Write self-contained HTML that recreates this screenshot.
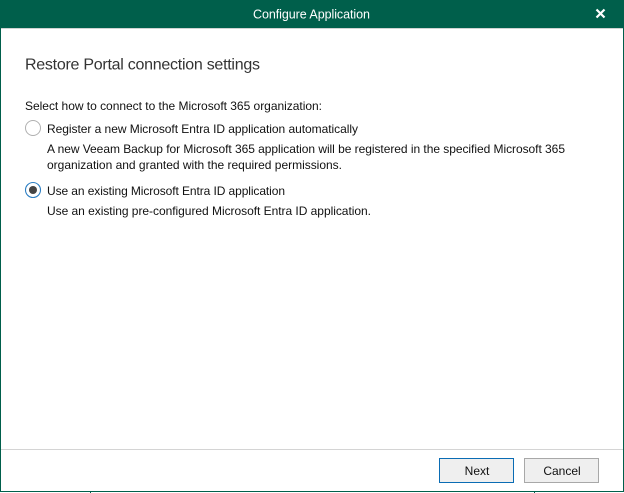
<!DOCTYPE html>
<html><head><meta charset="utf-8">
<style>
html,body{margin:0;padding:0;width:624px;height:493px;overflow:hidden;background:#fff}
svg{display:block}
text{font-family:"Liberation Sans",sans-serif;font-size:12px;fill:#111}
</style></head>
<body>
<svg width="624" height="493" viewBox="0 0 624 493" xmlns="http://www.w3.org/2000/svg">
<rect width="624" height="493" fill="#fff"/>
<rect x="0" y="0" width="624" height="28" fill="#005f4b"/>
<rect x="1" y="28" width="622" height="1" fill="#cfd3d2"/>
<rect x="0" y="28" width="1" height="464" fill="#005f4b"/>
<rect x="623" y="28" width="1" height="464" fill="#005f4b"/>
<rect x="0" y="491" width="624" height="1" fill="#005f4b"/>
<rect x="90" y="492" width="1" height="1" fill="#005f4b"/>
<rect x="534" y="492" width="1" height="1" fill="#005f4b"/>
<text x="253" y="18.500" textLength="117" lengthAdjust="spacing" style="fill:#fff;font-size:12.500px">Configure Application</text>
<path d="M596.500 9.500L604.500 17.500M604.500 9.500L596.500 17.500" stroke="#fff" stroke-width="2.200" fill="none"/>
<text x="25" y="69.500" textLength="235" lengthAdjust="spacing" style="font-size:16px;fill:#333">Restore Portal connection settings</text>
<text x="25" y="110" textLength="297" lengthAdjust="spacing">Select how to connect to the Microsoft 365 organization:</text>
<circle cx="33" cy="128" r="7.500" fill="#fff" stroke="#b0b0b0" stroke-width="1"/>
<text x="47" y="133" textLength="311" lengthAdjust="spacing">Register a new Microsoft Entra ID application automatically</text>
<text x="47" y="153" textLength="518" lengthAdjust="spacing">A new Veeam Backup for Microsoft 365 application will be registered in the specified Microsoft 365</text>
<text x="47" y="169" textLength="295" lengthAdjust="spacing">organization and granted with the required permissions.</text>
<circle cx="33" cy="190" r="7.500" fill="#fff" stroke="#2f80c4" stroke-width="1.100"/>
<circle cx="33" cy="190" r="4" fill="#444"/>
<text x="47" y="195" textLength="238" lengthAdjust="spacing">Use an existing Microsoft Entra ID application</text>
<text x="47" y="215" textLength="324" lengthAdjust="spacing">Use an existing pre-configured Microsoft Entra ID application.</text>
<rect x="1" y="449" width="622" height="1" fill="#d4d4d4"/>
<rect x="439.500" y="458.500" width="74" height="24" fill="#efefef" stroke="#0a6cb4" stroke-width="1"/>
<text x="477" y="475" text-anchor="middle" style="font-size:12px">Next</text>
<rect x="524.500" y="458.500" width="74" height="24" fill="#efefef" stroke="#a8a8a8" stroke-width="1"/>
<text x="562" y="475" text-anchor="middle" style="font-size:12px">Cancel</text>
</svg>
</body></html>
